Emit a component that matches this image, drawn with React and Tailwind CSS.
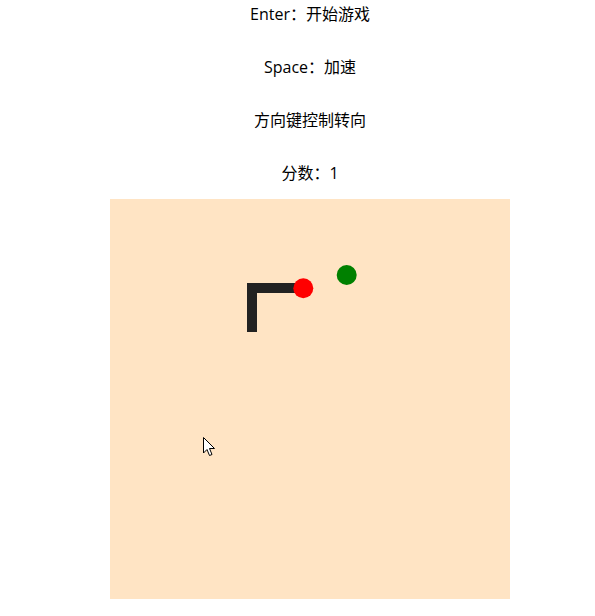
import React from "react";

const lines = ["Enter：开始游戏", "Space：加速", "方向键控制转向", "分数：1"];

export default function App() {
  return (
    <div
      className="relative w-[595px] h-[616px] bg-white text-black"
      style={{ fontFamily: '"Open Sans", "Noto Sans CJK SC", sans-serif' }}
    >
      <div className="ml-[110px] w-[400px]">
        <div className="flex flex-col items-center pt-[3px] gap-[31px] text-[16px] leading-[22px]">
          {lines.map((l) => (
            <p key={l}>{l}</p>
          ))}
        </div>
        <div className="mt-[15px] w-[400px] h-[400px] bg-[#ffe4c4]">
          <svg width="400" height="400" viewBox="0 0 400 400">
            <rect x="137" y="84" width="10" height="49" fill="#222" />
            <rect x="137" y="84" width="56" height="10" fill="#222" />
            <circle cx="193.3" cy="89.3" r="10" fill="#ff0000" />
            <circle cx="236.7" cy="76" r="10" fill="#008000" />
          </svg>
        </div>
      </div>
      <svg
        className="absolute left-[203px] top-[437px]"
        width="13"
        height="20"
        viewBox="0 0 13 20"
      >
        <path
          d="M0.5 0.5 L0.5 16 L4 12.5 L6.5 18.5 L9 17.5 L6.5 11.5 L11.5 11.5 Z"
          fill="#fff"
          stroke="#000"
          strokeWidth="1"
          strokeLinejoin="miter"
        />
      </svg>
    </div>
  );
}
